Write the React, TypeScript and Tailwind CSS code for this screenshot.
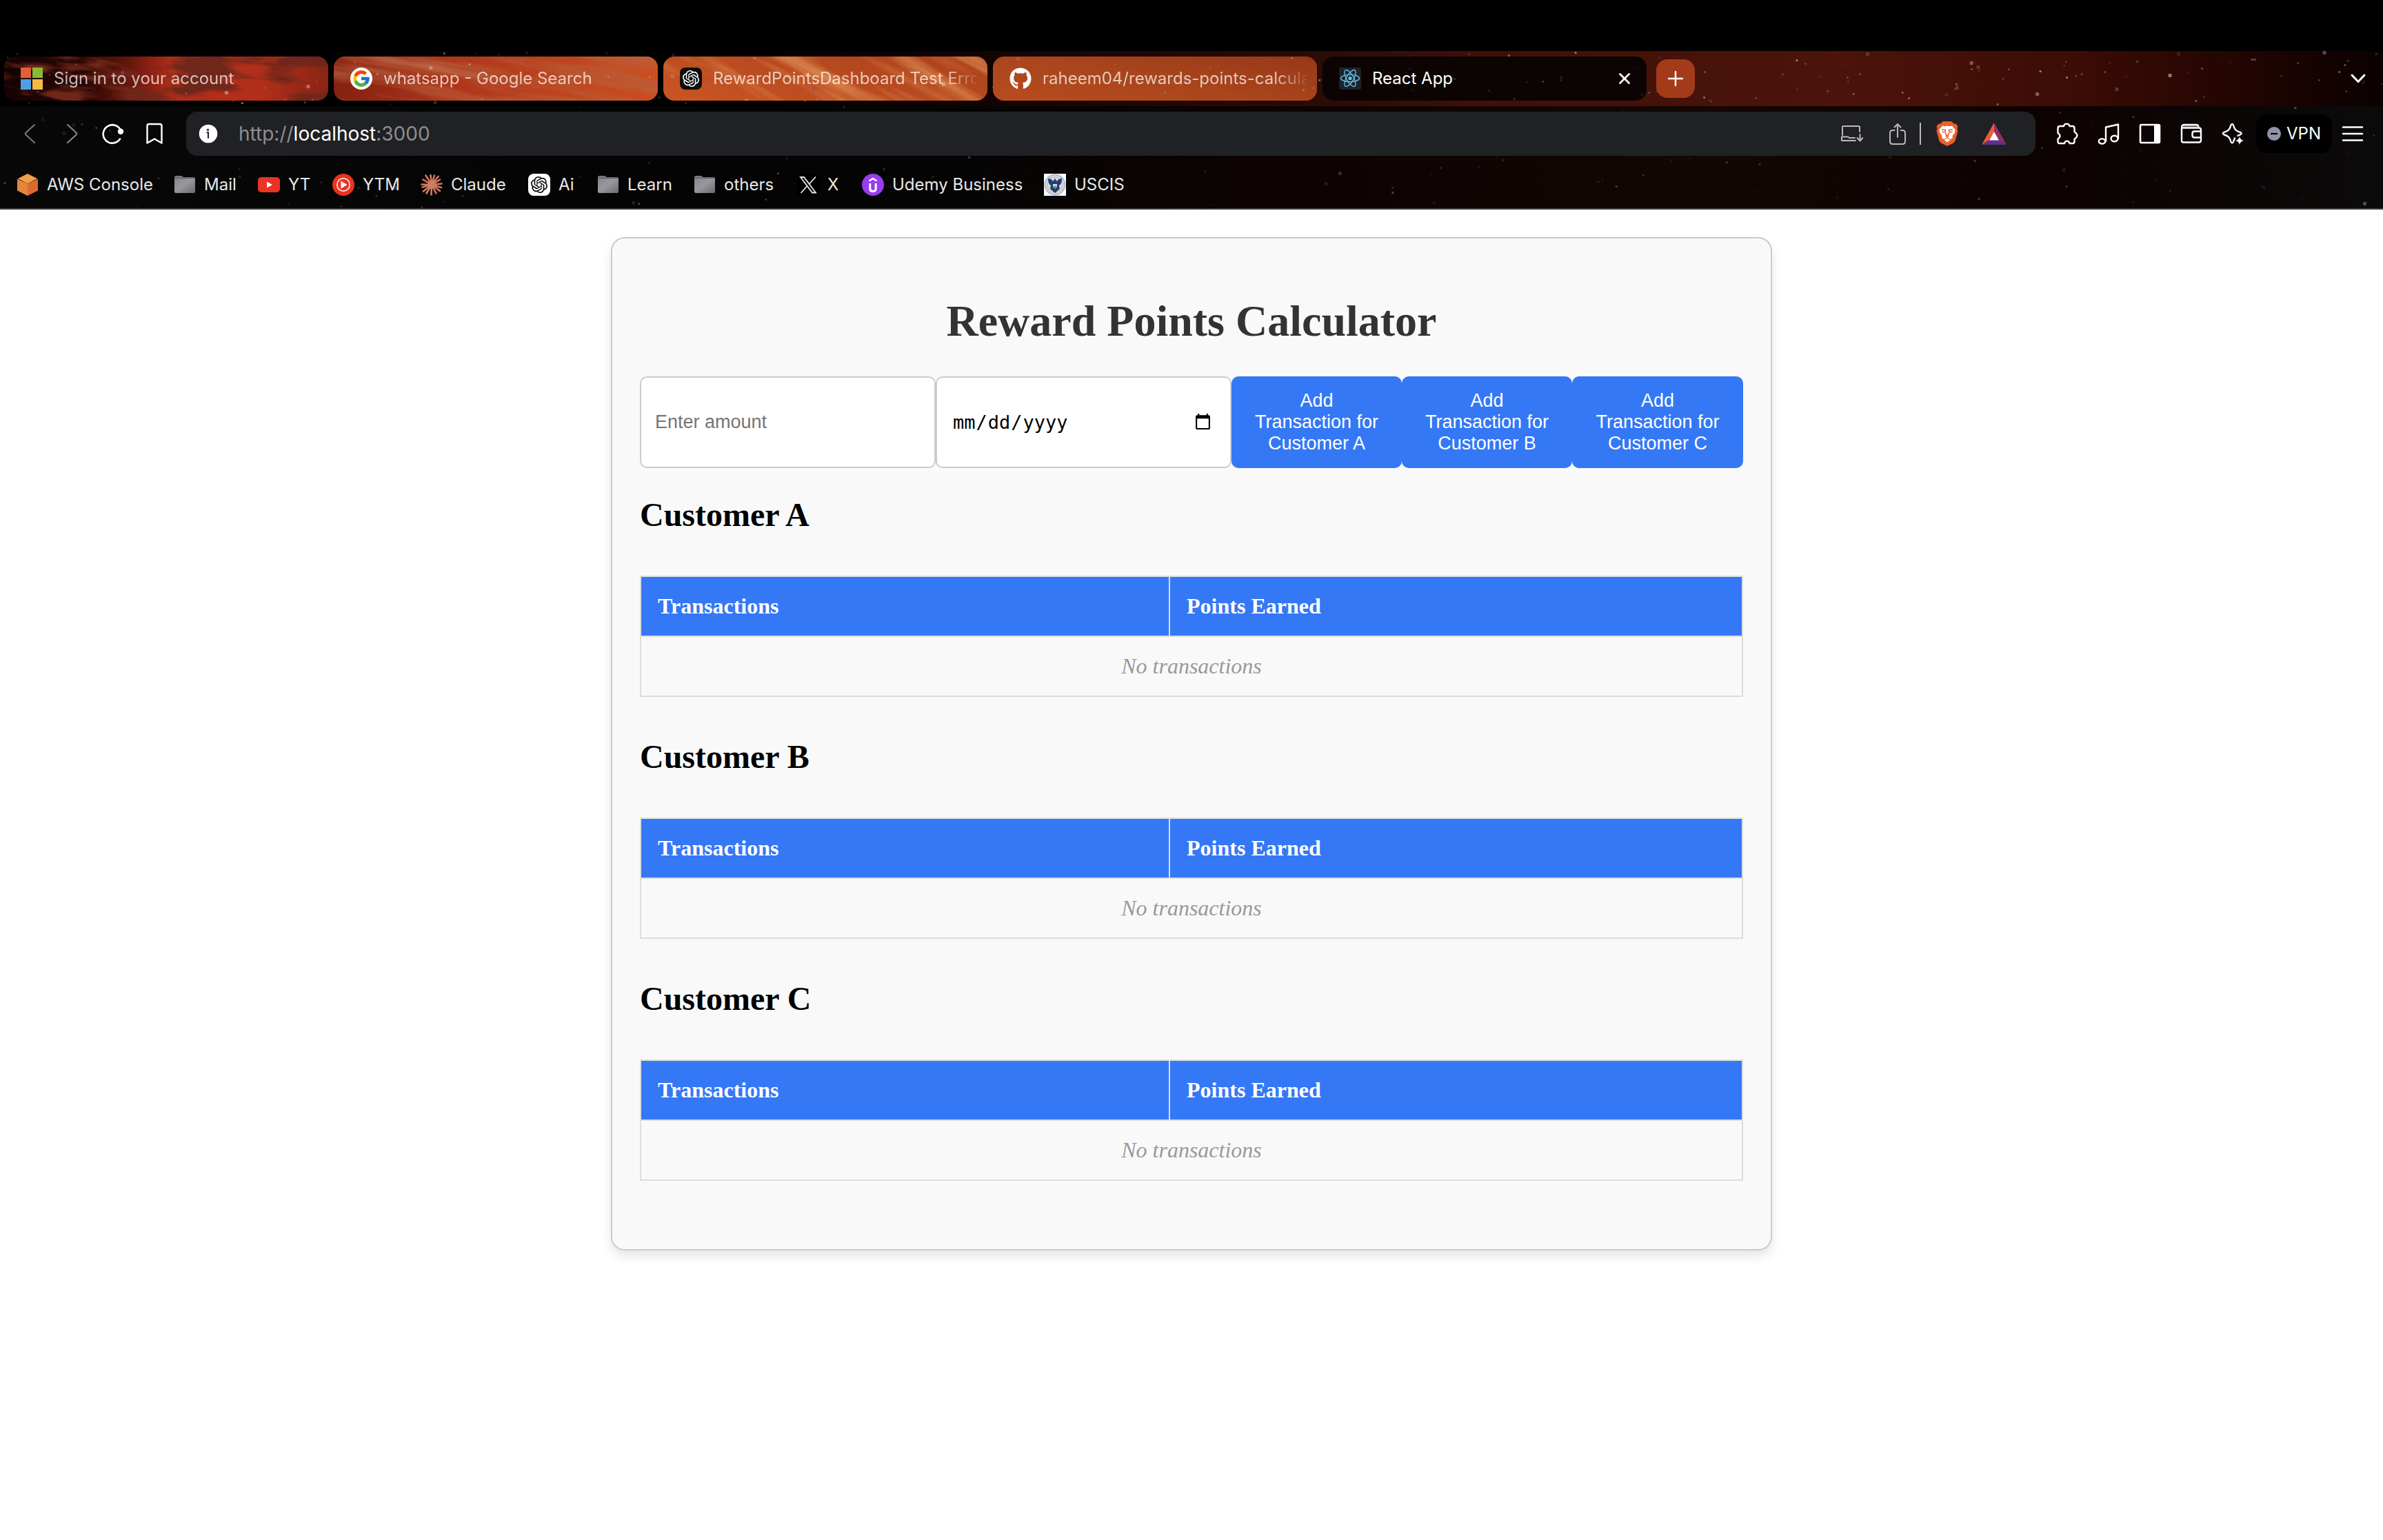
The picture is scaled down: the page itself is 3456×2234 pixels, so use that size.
import React from "react";
import { FcGoogle } from "react-icons/fc";
import { SiOpenai } from "react-icons/si";
import { FaGithub } from "react-icons/fa";

type IconProps = { className?: string };

/* ---------- Starry theme background ---------- */

function makeStars(count: number, seed: number, height: number) {
  let s = seed;
  const next = () => {
    s = (s * 1664525 + 1013904223) % 4294967296;
    return s / 4294967296;
  };
  return Array.from({ length: count }, () => ({
    x: next() * 100,
    y: Math.round(next() * height),
    size: next() > 0.85 ? 5 : 3,
    tint: ["#ffffff", "#d8b0a0", "#8a9aa8", "#6a3a80"][Math.floor(next() * 4)],
    alpha: 0.12 + next() * 0.45,
  }));
}

function Stars({ count, seed, height, dim }: { count: number; seed: number; height: number; dim: string }) {
  return (
    <svg className={`pointer-events-none absolute inset-0 h-full w-full ${dim}`} aria-hidden="true">
      {makeStars(count, seed, height).map((st, i) => (
        <rect key={i} x={`${st.x}%`} y={st.y} width={st.size} height={st.size} rx="1" fill={st.tint} opacity={st.alpha} />
      ))}
    </svg>
  );
}

/* ---------- Tab icons ---------- */

const MicrosoftIcon = () => (
  <svg viewBox="0 0 32 32" className="size-8 shrink-0">
    <path d="M0 0h15v15H0z" fill="#e15f35" />
    <path d="M17 0h15v15H17z" fill="#8ab933" />
    <path d="M0 17h15v15H0z" fill="#4ca0e8" />
    <path d="M17 17h15v15H17z" fill="#f5bb41" />
  </svg>
);

const GoogleIcon = () => (
  <span className="flex size-8 shrink-0 items-center justify-center rounded-full bg-white">
    <FcGoogle className="size-7" />
  </span>
);

const ChatIcon = () => (
  <span className="flex size-8 shrink-0 items-center justify-center rounded-lg bg-[#0d0d0d]">
    <SiOpenai className="size-6 text-white" />
  </span>
);

const ReactIcon = () => (
  <svg viewBox="0 0 32 32" className="size-8 shrink-0">
    <rect width="32" height="32" rx="3" fill="#20232a" />
    <g fill="none" stroke="#61c8ee" strokeWidth="1.3">
      <ellipse cx="16" cy="15.500" rx="13.500" ry="5.200" />
      <ellipse cx="16" cy="15.500" rx="13.500" ry="5.200" transform="rotate(60 16 15.500)" />
      <ellipse cx="16" cy="15.500" rx="13.500" ry="5.200" transform="rotate(120 16 15.500)" />
    </g>
    <circle cx="16" cy="15.500" r="2.600" fill="#61c8ee" />
  </svg>
);

const terrain = [
  { frequency: "0.012 0.05", seed: 4, shade: "0 0 0 0 0.16  0 0 0 0 0.02  0 0 0 0 0.01  4.5 0 0 0 -1.9", angle: 6 },
  { frequency: "0.004 0.04", seed: 9, shade: "0 0 0 0 0.48  0 0 0 0 0.12  0 0 0 0 0.05  3 0 0 0 -1.3", angle: 10 },
  { frequency: "0.003 0.03", seed: 12, shade: "0 0 0 0 0.85  0 0 0 0 0.38  0 0 0 0 0.14  2 0 0 0 -0.9", angle: 28 },
];

const Texture = ({ variant }: { variant: number }) => {
  const t = terrain[variant];
  if (!t) return null;
  return (
    <svg className="pointer-events-none absolute inset-0 h-full w-full" aria-hidden="true">
      <defs>
        <filter id={`terrain${variant}`} x="0" y="0" width="100%" height="100%">
          <feTurbulence type="fractalNoise" baseFrequency={t.frequency} numOctaves="4" seed={t.seed} />
          <feColorMatrix values={t.shade} />
        </filter>
      </defs>
      <g transform={`rotate(${t.angle} 235 32)`}>
        <rect x="-60" y="-180" width="600" height="420" filter={`url(#terrain${variant})`} />
      </g>
    </svg>
  );
};

const tabs = [
  { title: "Sign in to your account", icon: <MicrosoftIcon />, fill: "bg-[linear-gradient(90deg,#140202_0%,#2a0704_25%,#64150c_38%,#b02e1a_52%,#b02e1a_80%,#8a2414_100%)]" },
  { title: "whatsapp - Google Search", icon: <GoogleIcon />, fill: "bg-[linear-gradient(80deg,#82200f_0%,#ae351b_35%,#b8401c_60%,#ca5023_100%)]" },
  { title: "RewardPointsDashboard Test Error", icon: <ChatIcon />, fill: "bg-[linear-gradient(15deg,#cb5524_0%,#bb4d20_40%,#ac411b_100%)]" },
  { title: "raheem04/rewards-points-calculator", icon: <FaGithub className="size-8 shrink-0 text-white" />, fill: "bg-[linear-gradient(10deg,#b84c1f_0%,#a9451c_50%,#963818_100%)]" },
];

/* ---------- Toolbar icons ---------- */

const line = { fill: "none", stroke: "currentColor", strokeWidth: 2.6, strokeLinecap: "round" as const, strokeLinejoin: "round" as const };

const BackIcon = () => <svg viewBox="0 0 32 32" className="size-8"><path {...line} strokeWidth="2" d="M22 3 9.500 14.500q-1.500 1.500 0 3L22 29" /></svg>;
const ForwardIcon = () => <svg viewBox="0 0 32 32" className="size-8"><path {...line} strokeWidth="2" d="m10 3 12.500 11.500q1.500 1.500 0 3L10 29" /></svg>;
const ReloadIcon = () => (
  <svg viewBox="0 0 32 32" className="size-8">
    <path {...line} d="M27.500 12.500A13.200 13.200 0 1 0 26 23.500" />
    <circle cx="27" cy="12.800" r="4.200" fill="currentColor" />
  </svg>
);
const BookmarkIcon = () => <svg viewBox="0 0 32 32" className="size-8"><path {...line} strokeWidth="2.400" d="M5.500 4.500Q5.500 2 8 2h16q2.500 0 2.500 2.500V29.500L16 23.500 5.500 29.500z" /></svg>;
const InfoIcon = () => (
  <svg viewBox="0 0 28 28" className="size-7 shrink-0">
    <circle cx="14" cy="14" r="13.300" fill="#fff" />
    <circle cx="13.500" cy="8.300" r="1.600" fill="#202124" />
    <path d="M11.500 12.300H14v8.500" stroke="#202124" strokeWidth="2" fill="none" />
  </svg>
);
const InstallIcon = () => (
  <svg viewBox="0 0 32 32" className="size-8">
    <g {...line} strokeWidth="2">
      <path d="M2 18V6.500Q2 5 3.500 5h22Q27 5 27 6.500V13" />
      <path d="M1 20.500h9l2 1.500h8M1 20.500V26h20" />
      <path d="M27.500 17v9M23.500 22l4 4.500 4-4.500" />
    </g>
  </svg>
);
const ShareIcon = () => (
  <svg viewBox="0 0 32 32" className="size-8">
    <g {...line} strokeWidth="2">
      <path d="M11.500 11H9q-4 0-4 4v12q0 4 4 4h14q0 0 0 0 4 0 4-4V15q0-4-4-4h-2.500" />
      <path d="M16 21V2M11.500 6.500 16 2l4.500 4.500" />
    </g>
  </svg>
);
const BraveIcon = () => (
  <svg viewBox="0 0 32 36" className="h-9 w-8">
    <path d="M9.500 0h13L25.500 3.500 28.500 3.500 31.500 7 30.500 10.500 31.500 14 27.500 28.500 25 31.500 16 36 7 31.500 4.500 28.500.500 14 1.500 10.500.500 7 3.500 3.500 6.500 3.500z" fill="#ec5e2a" />
    <path d="M9 6.500 12.500 7.200 16 6.500 19.500 7.200 23 6.500 27.500 12 27 16.500 23.500 21 24 24 21 26 16 23 11 26 8 24 8.500 21 5 16.500 4.500 12z" fill="#fff" />
    <path d="M16 24.500 20.500 27 16 30.500 11.500 27z" fill="#fff" />
    <path d="m8 11.500 5.500 1L13 15l1 4 2 1.500 2-1.500 1-4-.500-2.500 5.500-1M8.500 15l3.500.500M23.500 15l-3.500.500" fill="none" stroke="#ec5e2a" strokeWidth="1.500" />
    <path d="m13 21 3-1 3 1-3 2.500z" fill="#ec5e2a" />
  </svg>
);
const BatIcon = () => (
  <svg viewBox="0 0 36 32" className="h-8 w-9">
    <path d="M18 0v13L11 25 0 32z" fill="#f15a35" />
    <path d="M18 0 36 32 25 25 18 13z" fill="#932d63" />
    <path d="M0 32 11 25h14l11 7z" fill="#5e3090" />
    <path d="M18 13 25 25.500H11z" fill="#fff" />
  </svg>
);
const PuzzleIcon = () => (
  <svg viewBox="0 0 32 32" className="size-8">
    <path {...line} strokeWidth="2.400" d="M2.500 8q0-3 3-3H11c1-4.500 7.500-4.500 8.500 0H23.500q3 0 3 3v5c1.500 2 4 2.500 4 5.500s-2.500 3.500-4 5.500v3.500q0 2.500-2.500 2.500h-4.500c-1-4.500-6.500-4.500-7.500 0H5Q2.500 30 2.500 27.500v-4c4-2.500 4-6 0-8.500z" />
  </svg>
);
const MusicIcon = () => (
  <svg viewBox="0 0 32 32" className="size-8">
    <g {...line} strokeWidth="2.400">
      <ellipse cx="6.500" cy="27" rx="4.700" ry="3.600" />
      <ellipse cx="24.500" cy="23" rx="5" ry="4.200" />
      <path d="M12 27V6.500L30 2.500V23" />
    </g>
  </svg>
);
const SidebarIcon = () => (
  <svg viewBox="0 0 32 32" className="size-8">
    <rect x="2" y="3" width="28" height="26" rx="1.500" {...line} />
    <path d="M22 3h8v26h-8z" fill="currentColor" />
  </svg>
);
const WalletIcon = () => (
  <svg viewBox="0 0 32 32" className="size-8">
    <g {...line} strokeWidth="2.400">
      <path d="M2 7.500V26q0 2.500 2.500 2.500h22.500q3 0 3-3V10.500q0-3-3-3zM2 7.500Q2 3 5 3h18q3.500 0 3.500 4" />
      <path d="M30 12.500h-9.500q-3 0-3 3v3q0 3 3 3H30" />
    </g>
    <path d="M4 3.500h20v3H4z" fill="currentColor" opacity=".35" />
  </svg>
);
const SparkleIcon = () => (
  <svg viewBox="0 0 32 32" className="size-8">
    <path {...line} strokeWidth="2.400" d="M19 22.500c-1 2.500-1.500 3-2 5-.700 2.300-2.900 2.300-3.600 0-1.700-6-3.400-8-9.400-10-3-.900-3-2.900 0-3.800 6-2 7.700-4 9.400-10 .700-2.500 2.900-2.500 3.600 0 1.700 6 3.400 8 9.400 10 3 .900 3 2.900 0 3.800l-3 1.300" />
    <path d="M26 20q1 5 6 6-5 1-6 6-1-5-6-6 5-1 6-6z" fill="currentColor" />
  </svg>
);
const MenuIcon = () => <svg viewBox="0 0 32 32" className="size-8"><path {...line} d="M2 6.500h28M2 16h28M2 25.500h28" /></svg>;

/* ---------- Bookmark icons ---------- */

const AwsIcon = () => (
  <svg viewBox="0 0 32 32" className="size-8 shrink-0">
    <path d="M16 0 30 7 16 14.500 2 7z" fill="#f2a047" />
    <path d="M1 7.500 16 14.500V32L1 24.500z" fill="#e6853c" />
    <path d="M31 7.500 16 14.500V32l15-7.500z" fill="#dc6932" />
  </svg>
);
const FolderIcon = () => (
  <svg viewBox="0 0 32 32" className="size-8 shrink-0">
    <defs>
      <linearGradient id="folder" x1="0" y1="0" x2="1" y2="1">
        <stop offset="0" stopColor="#85858b" />
        <stop offset=".45" stopColor="#98989e" />
        <stop offset="1" stopColor="#6a6a6e" />
      </linearGradient>
    </defs>
    <path d="M1 8V5q0-2 2-2h7.500q2 0 3 2H29q2 0 2 2v2z" fill="#77777b" />
    <rect x="1" y="6.500" width="30" height="21.500" rx="2" fill="url(#folder)" />
    <path d="M2 6.500h28" stroke="#5c5c60" strokeWidth="1" />
  </svg>
);
const YoutubeIcon = () => (
  <svg viewBox="0 0 32 32" className="size-8 shrink-0">
    <rect y="5" width="32" height="22" rx="5" fill="#ea3323" />
    <path d="m13 11.500 8 4.500-8 4.500z" fill="#fff" />
  </svg>
);
const YoutubeMusicIcon = () => (
  <svg viewBox="0 0 32 32" className="size-8 shrink-0">
    <circle cx="16" cy="16" r="16" fill="#ea3323" />
    <circle cx="16" cy="16" r="9.200" fill="none" stroke="#fff" strokeWidth="1.400" />
    <path d="m12.500 10.500 9 5.500-9 5.500z" fill="#fff" />
  </svg>
);
const ClaudeIcon = () => (
  <svg viewBox="0 0 32 32" className="size-8 shrink-0">
    <g stroke="#d27c5e" strokeWidth="2.600" strokeLinecap="round">
      <path d="M16 16 7.500 2.500M16 16 14.500 2M16 16l4-13.500M16 16 25.500 4M16 16l12-7.500M16 16l14.500-1.500M16 16l14 4M16 16l12 9M16 16l6.500 12.500M16 16l-.500 14.500M16 16 8.500 28.500M16 16 4 25.500M16 16 2.500 19.500M16 16 1.500 15.500M16 16 3.500 8.500" />
    </g>
  </svg>
);
const AiIcon = () => (
  <span className="flex size-8 shrink-0 items-center justify-center rounded-lg bg-white">
    <SiOpenai className="size-6 text-black" />
  </span>
);
const XIcon = () => (
  <svg viewBox="0 0 32 32" className="size-8 shrink-0">
    <rect width="32" height="32" fill="#000" />
    <path d="M5 5h5l17 22.500h-5zM27 4.500 17.500 15M14.500 18 5.500 28" fill="none" stroke="#e8e8e8" strokeWidth="1.800" />
  </svg>
);
const UdemyIcon = () => (
  <svg viewBox="0 0 32 32" className="size-8 shrink-0">
    <circle cx="16" cy="16" r="16" fill="#9a3cf0" />
    <path d="M10.500 10.500 16 7l5.500 3.500" fill="none" stroke="#fff" strokeWidth="2.600" />
    <path d="M11.800 14v7.500q0 4 4.200 4t4.200-4V14" fill="none" stroke="#fff" strokeWidth="3" />
  </svg>
);
const UscisIcon = () => (
  <svg viewBox="0 0 32 32" className="size-8 shrink-0">
    <rect width="32" height="32" fill="#fff" />
    <circle cx="16" cy="16" r="14.500" fill="#d3d8e0" stroke="#a9bccf" strokeWidth="2" />
    <circle cx="16" cy="16" r="11" fill="#e0dadd" stroke="#d9a9ad" strokeWidth="1" />
    <path d="M6 7q5 0 7 4l3-4 3 4q2-4 7-4 0 8-4 10l1 5-7 6-7-6 1-5q-4-2-4-10z" fill="#22406f" />
    <path d="M13 15h6v3q0 2-3 3.500-3-1.500-3-3.500z" fill="#c9d6e4" />
    <path d="M14 18h4v1q-1 2-2 2t-2-2z" fill="#5b8f4c" />
  </svg>
);

const bookmarks = [
  { label: "AWS Console", icon: <AwsIcon />, width: "w-[228px]" },
  { label: "Mail", icon: <FolderIcon />, width: "w-[122px]" },
  { label: "YT", icon: <YoutubeIcon />, width: "w-[108px]" },
  { label: "YTM", icon: <YoutubeMusicIcon />, width: "w-[128px]" },
  { label: "Claude", icon: <ClaudeIcon />, width: "w-[156px]" },
  { label: "Ai", icon: <AiIcon />, width: "w-[100px]" },
  { label: "Learn", icon: <FolderIcon />, width: "w-[140px]" },
  { label: "others", icon: <FolderIcon />, width: "w-[150px]" },
  { label: "X", icon: <XIcon />, width: "w-[94px]" },
  { label: "Udemy Business", icon: <UdemyIcon />, width: "w-[264px]" },
  { label: "USCIS", icon: <UscisIcon />, width: "w-[120px]" },
];

function IconButton({ label, className = "", children }: IconProps & { label: string; children: React.ReactNode }) {
  return (
    <button type="button" aria-label={label} className={`flex h-16 w-[60px] shrink-0 items-center justify-center ${className}`}>
      {children}
    </button>
  );
}

function BrowserChrome() {
  return (
    <header className="font-['Inter',sans-serif] text-white">
      <div className="h-[74px] bg-black" />

      <div className="relative overflow-hidden bg-[linear-gradient(90deg,#000_0%,#000_28%,#0d0202_38%,#2a0b05_55%,#3f1007_62%,#4c140a_77%,#3c0c05_87%,#220502_94%,#0a0101_100%)]">
        <Stars count={220} seed={7} height={78} dim="opacity-80" />
        <div className="relative flex h-20 items-center pl-1.5 pr-4">
          <div className="flex min-w-0 gap-2">
            {tabs.map((tab, i) => (
              <button key={tab.title} type="button" className={`relative flex h-16 w-[470px] min-w-0 items-center gap-4 overflow-hidden rounded-2xl pl-6 pr-4 text-left ${tab.fill}`}>
                <Texture variant={i} />
                <Stars count={14} seed={31 + i * 5} height={62} dim="opacity-70" />
                <span className="relative">{tab.icon}</span>
                <span className="relative min-w-0 flex-1 overflow-hidden whitespace-nowrap text-[24px] leading-8 text-white/70 [mask-image:linear-gradient(90deg,#000_88%,transparent_102%)]">
                  {tab.title}
                </span>
              </button>
            ))}
            <div className="relative flex h-16 w-[470px] min-w-0 items-center gap-4 overflow-hidden rounded-2xl bg-[#0b0403] pl-6 pr-6">
              <Stars count={16} seed={77} height={62} dim="opacity-40" />
              <span className="relative"><ReactIcon /></span>
              <span className="relative min-w-0 flex-1 truncate text-[24px] leading-8">React App</span>
              <button type="button" aria-label="Close tab" className="relative">
                <svg viewBox="0 0 16 16" className="size-4"><path d="m1.500 1.500 13 13m0-13-13 13" stroke="#fff" strokeWidth="2.800" strokeLinecap="round" /></svg>
              </button>
            </div>
          </div>
          <button type="button" aria-label="New tab" className="ml-3.5 flex size-14 shrink-0 items-center justify-center rounded-2xl bg-[#a33b1a]">
            <svg viewBox="0 0 22 22" className="size-[22px]"><path d="M11 1v20M1 11h20" stroke="#fff" strokeWidth="2.400" strokeLinecap="round" /></svg>
          </button>
          <button type="button" aria-label="Search tabs" className="ml-auto flex h-16 w-10 items-center justify-center">
            <svg viewBox="0 0 22 14" className="h-3.5 w-[22px]"><path d="m2 2 9 9.500L20 2" fill="none" stroke="#fff" strokeWidth="3" strokeLinecap="round" strokeLinejoin="round" /></svg>
          </button>
        </div>
      </div>

      <div className="relative overflow-hidden border-b-2 border-[#3c3c3c] bg-[linear-gradient(90deg,#080808_0%,#040404_25%,#050404_40%,#0e0302_55%,#130705_72%,#0d0202_86%,#0b0a0a_100%)]">
        <Stars count={150} seed={19} height={146} dim="opacity-50" />
        <div className="relative flex items-center pl-3.5 pr-3.5 pt-2">
          <IconButton label="Back" className="text-[#7a7a7a]"><BackIcon /></IconButton>
          <IconButton label="Forward" className="text-[#8a8a8a]"><ForwardIcon /></IconButton>
          <IconButton label="Reload"><ReloadIcon /></IconButton>
          <IconButton label="Bookmark this page"><BookmarkIcon /></IconButton>

          <div className="ml-4 flex h-16 min-w-0 flex-1 items-center rounded-2xl bg-[#202124] pl-[18px] pr-[42px]">
            <InfoIcon />
            <a href="http://localhost:3000" className="ml-[30px] flex-1 text-[28px] leading-9 text-[#8d8e90]">
              http://<span className="text-white">localhost</span>:3000
            </a>
            <IconButton label="Install app" className="text-[#b9b9ba]"><InstallIcon /></IconButton>
            <IconButton label="Share" className="ml-1.5 text-[#b9b9ba]"><ShareIcon /></IconButton>
            <span className="ml-0.5 h-8 w-0.5 bg-[#b9b9ba]" />
            <button type="button" aria-label="Brave Shields" className="ml-5 flex h-16 w-9 items-center justify-center"><BraveIcon /></button>
            <button type="button" aria-label="Brave Rewards" className="ml-8 flex h-16 w-9 items-center justify-center"><BatIcon /></button>
          </div>

          <div className="ml-4 flex shrink-0 items-center">
            <IconButton label="Extensions"><PuzzleIcon /></IconButton>
            <IconButton label="Media"><MusicIcon /></IconButton>
            <IconButton label="Sidebar"><SidebarIcon /></IconButton>
            <IconButton label="Wallet"><WalletIcon /></IconButton>
            <IconButton label="Assistant"><SparkleIcon /></IconButton>
            <button type="button" className="ml-1 flex h-14 w-[110px] items-center rounded-2xl bg-black pl-4 text-[24px] leading-8">
              <svg viewBox="0 0 20 20" className="mr-2 size-5"><circle cx="10" cy="10" r="10" fill="#9194a8" /><path d="M5 10h10" stroke="#000" strokeWidth="2.200" /></svg>
              VPN
            </button>
            <IconButton label="Menu"><MenuIcon /></IconButton>
          </div>
        </div>

        <nav aria-label="Bookmarks" className="relative flex h-[76px] items-center pl-6 pt-2">
          {bookmarks.map((b) => (
            <a key={b.label} href="#" className={`flex shrink-0 items-center gap-3 whitespace-nowrap text-[24px] leading-8 text-[#e8e8e8] ${b.width}`}>
              {b.icon}
              {b.label}
            </a>
          ))}
        </nav>
      </div>
    </header>
  );
}

/* ---------- Reward points page ---------- */

const customers = ["A", "B", "C"];

function CustomerSection({ name }: { name: string }) {
  return (
    <section className="mb-[59px]">
      <h2 className="mb-[61px] text-[48px] font-bold leading-[55px] text-black">{`Customer ${name}`}</h2>
      <table className="w-full border-collapse text-[32px] leading-[37px]">
        <thead>
          <tr>
            <th className="w-[48%] border-2 border-[#ddd] bg-[#3478f6] p-6 text-left font-bold text-white">Transactions</th>
            <th className="border-2 border-[#ddd] bg-[#3478f6] p-6 text-left font-bold text-white">Points Earned</th>
          </tr>
        </thead>
        <tbody>
          <tr>
            <td colSpan={2} className="border-2 border-[#ddd] p-6 text-center italic text-[#999]">No transactions</td>
          </tr>
        </tbody>
      </table>
    </section>
  );
}

export default function App() {
  return (
    <div className="min-h-screen bg-white">
      <BrowserChrome />
      <main className="mx-auto mt-10 w-full max-w-[1684px] rounded-[20px] border-2 border-[#ccc] bg-[#f9f9f9] p-10 font-['Liberation_Serif',serif] shadow-[0_8px_16px_rgba(0,0,0,0.1)]">
        <h1 className="my-[43px] text-center text-[64px] font-bold leading-[74px] text-[#333]">Reward Points Calculator</h1>
        <form className="mb-10 grid min-h-[133px] grid-cols-[429fr_429fr_247fr_247fr_248fr] font-['Liberation_Sans',sans-serif] text-[27px] leading-[31px]">
          <input
            type="number"
            aria-label="Enter amount"
            placeholder="Enter amount"
            className="min-w-0 rounded-[10px] border-2 border-[#ccc] bg-white px-5 text-black placeholder:text-[#757575]"
          />
          <input
            type="date"
            aria-label="Transaction date"
            className="min-w-0 rounded-[10px] border-2 border-[#ccc] bg-white pl-[22px] pr-6 font-['DejaVu_Sans_Mono',monospace] text-black"
          />
          {customers.map((c) => (
            <button key={c} type="button" className="min-w-0 rounded-[10px] bg-[#3478f6] px-7 text-center text-white">
              {`Add Transaction for Customer ${c}`}
            </button>
          ))}
        </form>
        {customers.map((c) => (
          <CustomerSection key={c} name={c} />
        ))}
      </main>
    </div>
  );
}
